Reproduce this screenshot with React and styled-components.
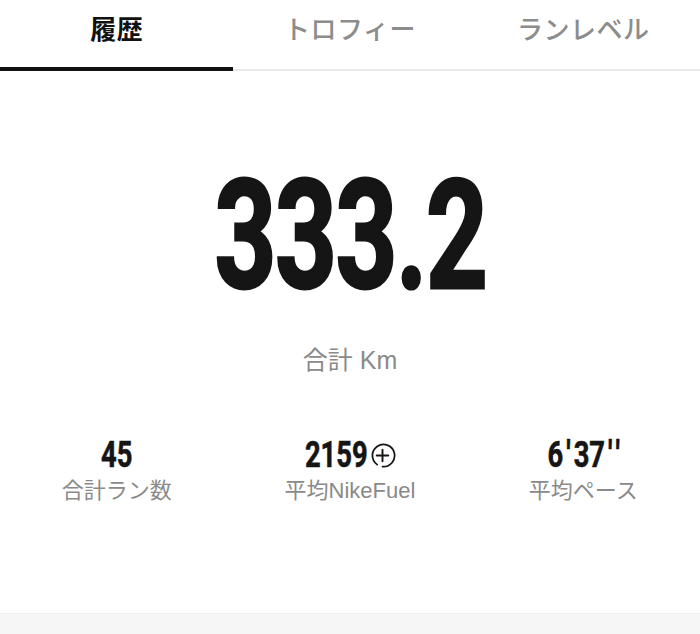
import React from "react";
import styled, { createGlobalStyle } from "styled-components";

const GlobalStyle = createGlobalStyle`
  html, body { margin: 0; padding: 0; background: #ffffff; }
  body { font-family: "Liberation Sans", "Noto Sans CJK JP", sans-serif; }
`;

const Page = styled.div`
  width: 700px;
  height: 634px;
  display: flex;
  flex-direction: column;
  background: #ffffff;
  overflow: hidden;
`;

const TabBar = styled.nav`
  display: grid;
  grid-template-columns: repeat(3, 1fr);
  height: 71px;
`;

const Tab = styled.div`
  box-sizing: border-box;
  display: flex;
  align-items: center;
  justify-content: center;
  padding-bottom: ${(p) => (p.$active ? "12px" : "14px")};
  border-bottom: ${(p) => (p.$active ? "4px solid #111111" : "2px solid #e9e9e9")};
  font-family: "Noto Sans CJK JP", sans-serif;
  font-weight: ${(p) => (p.$active ? 700 : 500)};
  font-size: 26px;
  line-height: 1;
  color: ${(p) => (p.$active ? "#111111" : "#8c8c8c")};
  letter-spacing: 0.5px;
`;

const Hero = styled.section`
  display: flex;
  flex-direction: column;
  align-items: center;
  padding-top: 89px;
`;

const BigNumber = styled.div`
  font-family: "Roboto", sans-serif;
  font-weight: 700;
  font-size: 152px;
  line-height: 1;
  color: #151515;
  transform: scaleX(0.71);
  -webkit-text-stroke: 3px #151515;
  letter-spacing: -2px;
`;

const Unit = styled.div`
  margin-top: 36px;
  font-family: "Liberation Sans", "Noto Sans CJK JP", sans-serif;
  font-size: 25px;
  line-height: 1;
  color: #8a8a8a;
`;

const StatsRow = styled.section`
  display: grid;
  grid-template-columns: repeat(3, 1fr);
  margin-top: 64px;
`;

const Stat = styled.div`
  display: flex;
  flex-direction: column;
  align-items: center;
`;

const ValueLine = styled.div`
  display: flex;
  align-items: center;
`;

const Value = styled.div`
  font-family: "Roboto", sans-serif;
  font-weight: 700;
  font-size: 36px;
  line-height: 1;
  color: #151515;
  transform: scaleX(0.76);
  -webkit-text-stroke: 0.6px #151515;
  margin: 0 -${(p) => p.$trim || 0}px;
`;

const Tick = styled.span`
  padding: 0 ${(p) => p.$pad || 4}px;
`;

const Label = styled.div`
  margin-top: 4px;
  font-family: "Liberation Sans", "Noto Sans CJK JP", sans-serif;
  font-size: 22px;
  line-height: 1.3;
  color: #8a8a8a;
`;

const FuelIcon = styled.svg`
  width: 27px;
  height: 27px;
  display: block;
`;

const Spacer = styled.div`
  flex: 1;
`;

const Footer = styled.div`
  height: 20px;
  background: #f6f6f6;
  border-top: 1px solid #efefef;
`;

function Fuel() {
  return (
    <FuelIcon viewBox="0 0 28 28">
      <path
        d="M8.5 23.5 A11.5 11.5 0 1 1 14 25.5"
        fill="none"
        stroke="#151515"
        strokeWidth="1.8"
        strokeLinecap="round"
      />
      <path d="M14 8 V20 M8 14 H20" stroke="#151515" strokeWidth="2" strokeLinecap="round" />
    </FuelIcon>
  );
}

export default function App() {
  return (
    <>
      <GlobalStyle />
      <Page>
        <TabBar>
          <Tab $active>履歴</Tab>
          <Tab>トロフィー</Tab>
          <Tab>ランレベル</Tab>
        </TabBar>
        <Hero>
          <BigNumber>333.2</BigNumber>
          <Unit>合計 Km</Unit>
        </Hero>
        <StatsRow>
          <Stat>
            <Value>45</Value>
            <Label>合計ラン数</Label>
          </Stat>
          <Stat>
            <ValueLine>
              <Value $trim={9}>2159</Value>
              <Fuel />
            </ValueLine>
            <Label>平均NikeFuel</Label>
          </Stat>
          <Stat>
            <Value>
              6<Tick>'</Tick>37<Tick $pad={4}>'</Tick>'
            </Value>
            <Label>平均ペース</Label>
          </Stat>
        </StatsRow>
        <Spacer />
        <Footer />
      </Page>
    </>
  );
}
